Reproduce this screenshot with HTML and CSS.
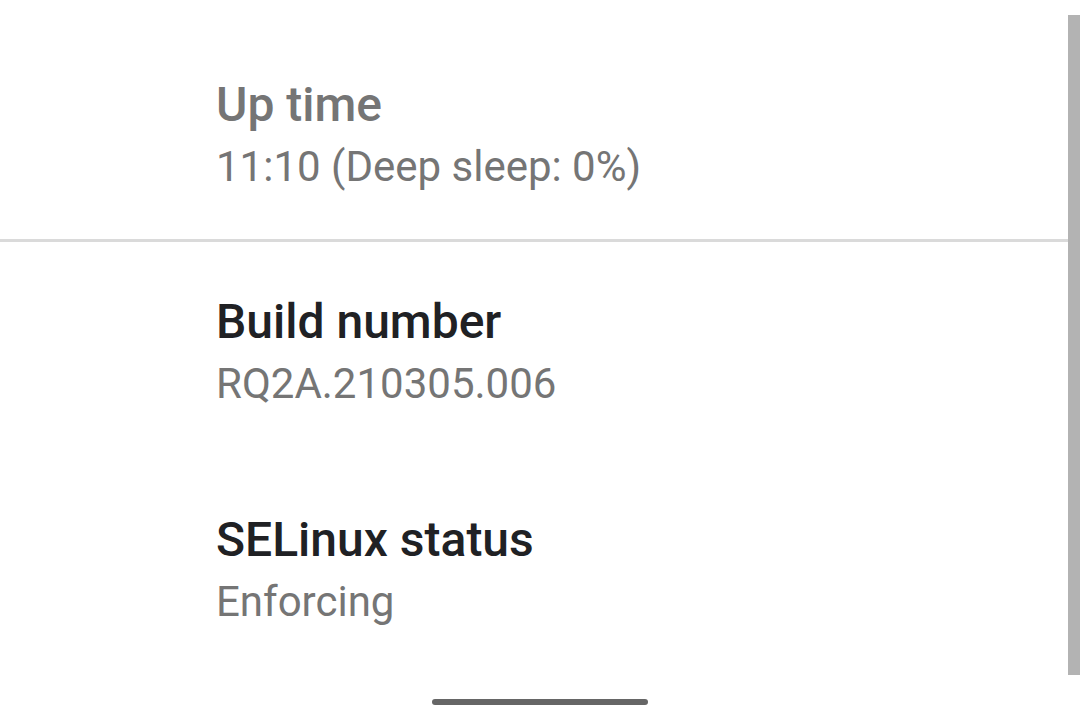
FILE: index.html
```html
<!DOCTYPE html>
<html lang="en">
<head>
  <meta charset="UTF-8">
  <meta name="viewport" content="width=device-width, initial-scale=1.0">
  <title>About phone</title>
  <link rel="stylesheet" href="styles.css">
</head>
<body>
  <div class="screen">
    <div class="list">
      <div class="pref disabled divided">
        <div class="pref-title">Up time</div>
        <div class="pref-summary">11:10 (Deep sleep: 0%)</div>
      </div>
      <div class="pref">
        <div class="pref-title">Build number</div>
        <div class="pref-summary">RQ2A.210305.006</div>
      </div>
      <div class="pref">
        <div class="pref-title">SELinux status</div>
        <div class="pref-summary">Enforcing</div>
      </div>
    </div>

    <!-- overlay bits -->
    <div class="scrollbar"></div>
    <div class="nav-handle"></div>
  </div>
</body>
</html>
```

FILE: styles.css
```css
* {
    margin: 0;
    padding: 0;
    box-sizing: border-box;
}

body {
    font-family: Roboto, "Noto Sans", Arial, sans-serif;
    background-color: #fff;
    width: 1080px;
    height: 722px;
    overflow: hidden;
}

.screen {
    position: relative;
    width: 1080px;
    height: 722px;
}

.list {
    padding-top: 25px;
}

.pref {
    padding: 48px 0 46px 216px;
}

.pref.divided {
    padding-bottom: 42px;
    border-bottom: 3px solid #dadada;
}

.pref-title {
    font-size: 48px;
    line-height: 64px;
    font-weight: 500;
    color: #202124;
}

.pref-summary {
    font-size: 42px;
    line-height: 60px;
    color: #757575;
}

.pref.disabled .pref-title {
    color: #757575;
}

.scrollbar {
    position: absolute;
    top: 15px;
    right: 0;
    width: 12px;
    height: 660px;
    background-color: #b3b3b3;
}

.nav-handle {
    position: absolute;
    left: 432px;
    top: 699px;
    width: 216px;
    height: 6px;
    border-radius: 3px;
    background-color: #666;
}
```
